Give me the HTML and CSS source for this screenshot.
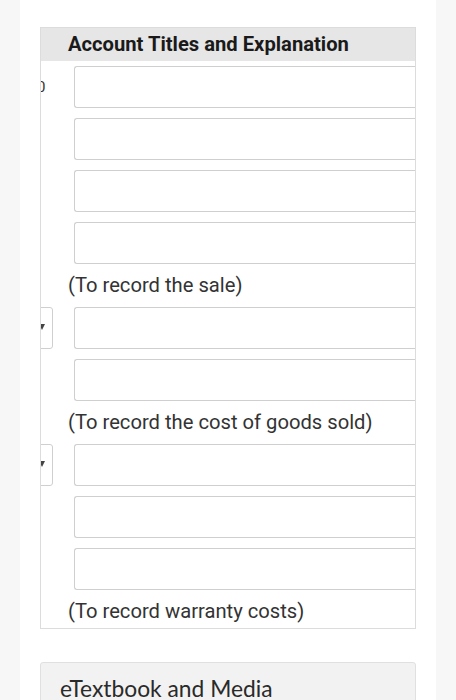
FILE: index.html
```html
<!DOCTYPE html>
<html>
<head>
<meta charset="utf-8">
<link rel="stylesheet" href="styles.css">
</head>
<body>
<div class="page">
  <div class="journal">
    <div class="head-row">Account Titles and Explanation</div>
    <div class="row"><div class="lead"><span class="clip-num">0</span></div><div class="field"></div></div>
    <div class="row"><div class="lead"></div><div class="field"></div></div>
    <div class="row"><div class="lead"></div><div class="field"></div></div>
    <div class="row"><div class="lead"></div><div class="field"></div></div>
    <div class="note">(To record the sale)</div>
    <div class="row"><div class="lead"><div class="select"><span class="arrow"></span></div></div><div class="field"></div></div>
    <div class="row"><div class="lead"></div><div class="field"></div></div>
    <div class="note">(To record the cost of goods sold)</div>
    <div class="row"><div class="lead"><div class="select"><span class="arrow"></span></div></div><div class="field"></div></div>
    <div class="row"><div class="lead"></div><div class="field"></div></div>
    <div class="row"><div class="lead"></div><div class="field"></div></div>
    <div class="note">(To record warranty costs)</div>
  </div>
  <div class="media">eTextbook and Media</div>
</div>
</body>
</html>
```
FILE: styles.css
```css
html, body {
  margin: 0;
  padding: 0;
  background: #f7f7f7;
}
body {
  font-family: Roboto, "Liberation Sans", sans-serif;
  height: 700px;
  overflow: hidden;
}
.page {
  margin: 0 20px;
  background: #ffffff;
  height: 700px;
  padding: 27px 20px 0 20px;
  box-sizing: border-box;
}
.journal {
  border: 1px solid #dcdcdc;
  overflow: hidden;
  background: #fff;
}
.head-row {
  background: #e6e6e6;
  height: 33px;
  line-height: 33px;
  padding-left: 27px;
  font-weight: bold;
  font-size: 20.2px;
  color: #1a1a1a;
}
.row {
  display: flex;
  padding: 5px 0;
  height: 42px;
}
.lead {
  width: 33px;
  flex: none;
  overflow: hidden;
  display: flex;
  align-items: center;
}
.clip-num {
  font-family: Roboto, sans-serif;
  font-size: 15px;
  color: #333;
  margin-left: -4px;
}
.select {
  width: 60px;
  height: 42px;
  flex: none;
  margin-left: -48px;
  box-sizing: border-box;
  border: 1px solid #cfcfcf;
  border-radius: 3px;
  position: relative;
}
.arrow {
  position: absolute;
  right: 7px;
  top: 16px;
  width: 0;
  height: 0;
  border-left: 3px solid transparent;
  border-right: 3px solid transparent;
  border-top: 6px solid #444;
}
.field {
  flex: 1;
  height: 42px;
  box-sizing: border-box;
  border: 1px solid #cfcfcf;
  border-right-width: 0;
  border-radius: 3px 0 0 3px;
}
.note {
  height: 33px;
  line-height: 33px;
  padding-left: 27px;
  font-size: 20.2px;
  color: #333;
}
.media {
  margin-top: 33px;
  background: #f2f2f2;
  border: 1px solid #e0e0e0;
  border-radius: 3px;
  height: 60px;
  padding: 13px 0 0 19px;
  font-family: Lato, "Open Sans", sans-serif;
  font-size: 22.8px;
  color: #2a2a2a;
  line-height: 24px;
}
```
